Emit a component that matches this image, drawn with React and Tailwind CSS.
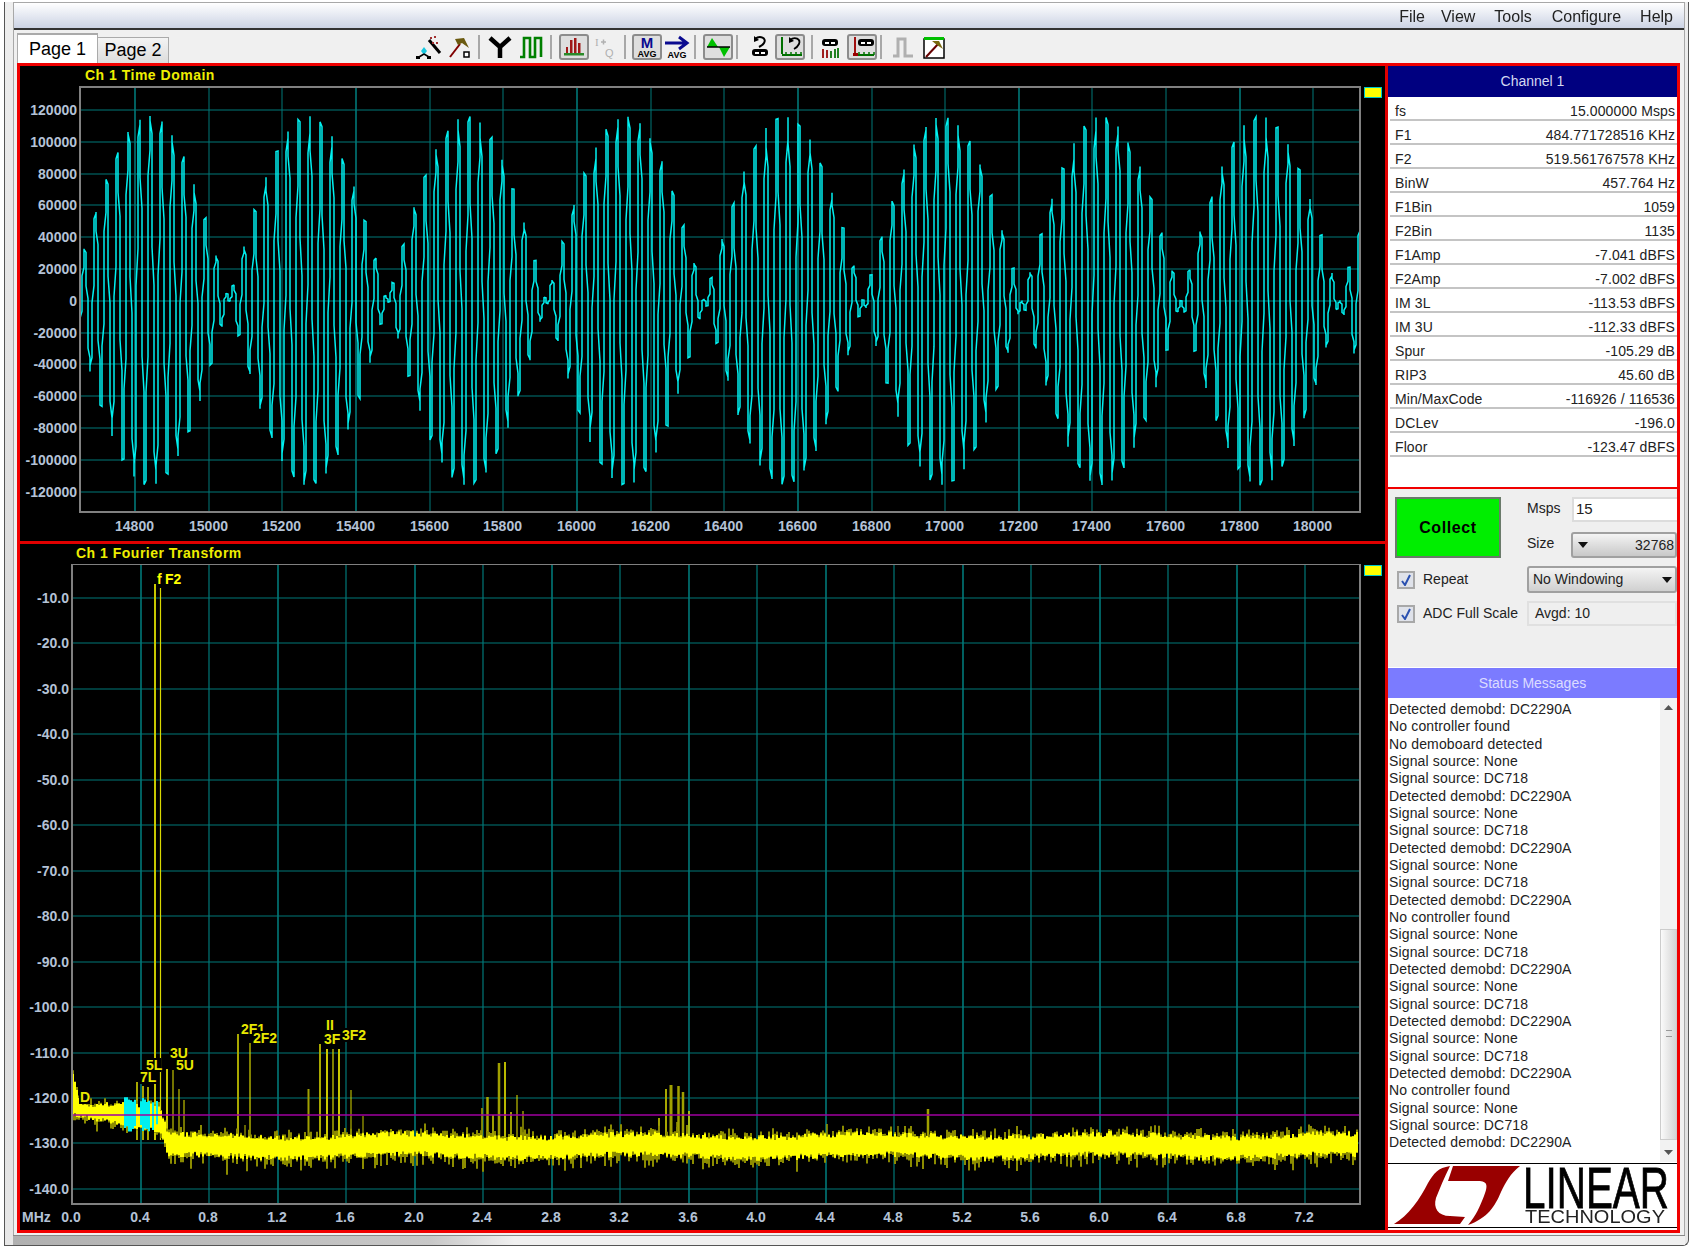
import { useMemo } from "react"

const infoRows = [
  ["fs", "15.000000 Msps"],
  ["F1", "484.771728516 KHz"],
  ["F2", "519.561767578 KHz"],
  ["BinW", "457.764 Hz"],
  ["F1Bin", "1059"],
  ["F2Bin", "1135"],
  ["F1Amp", "-7.041 dBFS"],
  ["F2Amp", "-7.002 dBFS"],
  ["IM 3L", "-113.53 dBFS"],
  ["IM 3U", "-112.33 dBFS"],
  ["Spur", "-105.29 dB"],
  ["RIP3", "45.60 dB"],
  ["Min/MaxCode", "-116926 / 116536"],
  ["DCLev", "-196.0"],
  ["Floor", "-123.47 dBFS"],
]

const D = "Detected demobd: DC2290A"
const N = "Signal source: None"
const S = "Signal source: DC718"
const C = "No controller found"
const messages = [D, C, "No demoboard detected", N, S, D, N, S, D, N, S, D, C, N, S, D, N, S, D, N, S, D, C, N, S, D]

const AXIS = "#b4c2d6"
const GRID = "#007878"

function rng(seed) {
  let s = seed
  return () => {
    s = (s * 16807) % 2147483647
    return s / 2147483647
  }
}

// two tone signal, 15 Msps, snapped to pixel columns like the original plot
function wavePath() {
  let d = ""
  for (let n = 14650; n <= 18129; n += 1) {
    const x = Math.round((135 + (n - 14800) * 0.368) / 2) * 2
    const env = Math.sin(Math.PI * (34790 / 15e6) * (n - 15055))
    const car = Math.cos(2 * Math.PI * (502167 / 15e6) * (n - 14827))
    const y = 300.7 - 116000 * env * car * 0.0015917
    d += (d ? "L" : "M") + x + " " + y.toFixed(1)
  }
  return d
}

function noiseFloor() {
  const r = rng(4711)
  let bright = ""
  let dim = ""
  let cyan = ""
  for (let x = 72; x <= 1356; x += 2) {
    let top, bot, tipT, tipB
    if (x < 166) {
      const t = (x - 72) / 94
      top = 1102 + 6 * r()
      bot = 1112 + 18 * t + 5 * r()
      if (x > 158) {
        top += (x - 158) * 3.2
        bot += (x - 158) * 2.2
      }
      if (x < 79) top = 1074 + (x - 72) * 4
      tipT = top - 8 * r() * r()
      tipB = bot + 11 * r() * r()
    } else {
      const c = 1146 + 2 * Math.sin(x / 37)
      top = c - 7 - r() * 6
      bot = c + 7 + r() * 6
      tipT = top - 11 * r() * r()
      tipB = bot + 15 * r() * r()
      if (r() > 0.97) tipB += 8
    }
    bright += `M${x + 1} ${top.toFixed(1)}V${bot.toFixed(1)}`
    dim += `M${x + 1} ${tipT.toFixed(1)}V${tipB.toFixed(1)}`
    if ((x >= 123 && x < 135) || (x >= 139 && x < 148) || (x >= 148 && x < 158 && x % 4 === 0)) {
      cyan += `M${x + 1} ${1097 + r() * 6}V${1124 + r() * 8}`
    }
  }
  return { bright, dim, cyan }
}

// [x, top, width, colour]
const spikes = [
  [137, 1082, 2, "#a8a800"], [143, 1086, 2, "#a8a800"], [148, 1087, 2, "#a8a800"],
  [155, 584, 2, "#c8c800"], [160.5, 588, 1.2, "#d8d800"],
  [167, 1069, 2, "#c8c800"], [173, 1070, 1, "#e8e800"], [179, 1089, 1, "#e8e800"], [184, 1100, 1, "#e8e800"],
  [238, 1034, 2, "#a8a800"], [245, 1125, 1, "#c8c800"], [250, 1043, 1.2, "#d8d800"],
  [308.5, 1089, 2, "#a0a000"], [320, 1044, 2, "#a8a800"], [327, 1049, 2, "#c8c800"], [333, 1049, 1.2, "#d8d800"],
  [339, 1049, 2, "#c8c800"], [351, 1090, 1, "#d8d800"], [363, 1116, 1, "#c8c800"],
  [482, 1108, 1.5, "#a8a800"], [487.5, 1097, 2.5, "#a8a800"], [493, 1115, 2, "#a0a000"], [499, 1063, 2.5, "#a0a000"],
  [505, 1062, 2, "#b8b800"], [511, 1112, 2, "#a0a000"], [517, 1095, 1, "#e8e800"], [523, 1111, 1, "#e8e800"],
  [659, 1118, 2, "#a0a000"], [666, 1089, 2, "#a8a800"], [671, 1085, 3, "#a0a000"], [677, 1122, 1.5, "#a0a000"],
  [678.5, 1086, 2.5, "#a0a000"], [683, 1092, 2.5, "#a0a000"], [689, 1111, 1.5, "#d8d800"],
  [827, 1124, 1.5, "#a0a000"], [898, 1126, 1, "#c8c800"], [928, 1109, 2.5, "#a0a000"],
]

// [text, x, baseline, box width]
const peakLabels = [
  ["3U", 170, 1058, 19], ["5L", 146, 1070, 16], ["5U", 176, 1070, 18], ["7L", 140, 1082, 17], ["D", 80, 1102, 11],
  ["2F1", 241, 1034, 24], ["2F2", 253, 1043, 25], ["II", 326, 1030, 9], ["3F", 324, 1044, 18], ["3F2", 342, 1040, 24],
]

function TimeChart() {
  const d = useMemo(wavePath, [])
  const xTicks = Array.from({ length: 17 }, (_, i) => 14800 + i * 200)
  const yTicks = Array.from({ length: 13 }, (_, i) => 120000 - i * 20000)
  return (
    <svg width="1365" height="455" viewBox="20 86 1365 455" className="block">
      <defs>
        <clipPath id="plotA"><rect x="81" y="88" width="1278" height="423" /></clipPath>
      </defs>
      {xTicks.map((t, i) => {
        const x = Math.round(135 + i * 73.65)
        return (
          <g key={t}>
            <line x1={x} x2={x} y1="87" y2="512" stroke={GRID} strokeWidth={i % 3 === 0 ? 1.6 : 1} />
            <text x={x - 0.5} y="531" fontSize="14" fontWeight="700" fill={AXIS} textAnchor="middle">{t}</text>
          </g>
        )
      })}
      {yTicks.map((t, i) => {
        const y = Math.round(110 + i * 31.8)
        return (
          <g key={t}>
            <line x1="80" x2="1360" y1={y} y2={y} stroke={GRID} strokeWidth="1.2" />
            <text x="77" y={y + 5} fontSize="14" fontWeight="700" fill={AXIS} textAnchor="end">{t}</text>
          </g>
        )
      })}
      <path d={d} clipPath="url(#plotA)" fill="none" stroke="#00f0f0" strokeWidth="1.5" />
      <rect x="80" y="87" width="1280" height="425" fill="none" stroke="#808080" strokeWidth="2" />
      <rect x="1364.5" y="87.5" width="17" height="10" fill="#ffff00" stroke="#00c8c8" />
    </svg>
  )
}

function FourierChart() {
  const floor = useMemo(noiseFloor, [])
  const yTicks = Array.from({ length: 14 }, (_, i) => -10 - i * 10)
  const xTicks = Array.from({ length: 19 }, (_, i) => i * 0.4)
  return (
    <svg width="1365" height="666" viewBox="20 564 1365 666" className="block">
      {xTicks.map((t, i) => {
        const x = Math.round(72 + t * 171.3)
        return (
          <g key={i}>
            <line x1={x} x2={x} y1="564" y2="1204" stroke={GRID} strokeWidth={i % 2 === 0 ? 1.2 : 1.6} />
            <text x={x - 1} y="1222" fontSize="14" fontWeight="700" fill={AXIS} textAnchor="middle">{t.toFixed(1)}</text>
          </g>
        )
      })}
      <text x="22" y="1222" fontSize="14" fontWeight="700" fill={AXIS}>MHz</text>
      {yTicks.map((t, i) => {
        const y = Math.round(598 + i * 45.45)
        return (
          <g key={t}>
            <line x1="72" x2="1360" y1={y} y2={y} stroke={GRID} strokeWidth="1.2" />
            <text x="69" y={y + 5} fontSize="14" fontWeight="700" fill={AXIS} textAnchor="end">{t.toFixed(1)}</text>
          </g>
        )
      })}
      {spikes.map(([x, top, w, c]) => (
        <line key={x} x1={x} x2={x} y1={top} y2="1140" stroke={c} strokeWidth={w} />
      ))}
      <path d={floor.dim} stroke="#8c8c00" strokeWidth="2" fill="none" />
      <path d={floor.bright} stroke="#ffff00" strokeWidth="2" fill="none" />
      <path d={floor.cyan} stroke="#00f0f0" strokeWidth="2" fill="none" />
      <line x1="72" x2="1360" y1="1115" y2="1115" stroke="#a000a0" strokeWidth="1.4" />
      {peakLabels.map(([txt, x, y, w]) => (
        <g key={txt + x}>
          <rect x={x - 1} y={y - 12} width={w} height="14" fill="#000" />
          <text x={x} y={y} fontSize="14" fontWeight="700" fill="#e8e800">{txt}</text>
        </g>
      ))}
      <text x="157" y="584" fontSize="14" fontWeight="700" fill="#ffff00">f</text>
      <text x="165" y="584" fontSize="14" fontWeight="700" fill="#ffff00">F2</text>
      <rect x="72" y="564" width="1288" height="640" fill="none" stroke="#808080" strokeWidth="2" />
      <rect x="1364.5" y="565.5" width="17" height="10" fill="#ffff00" stroke="#00c8c8" />
    </svg>
  )
}

function Sep({ className }) {
  return <div className={"h-[24px] w-[2px] bg-[#a8a8a8] " + className} />
}

function Tool({ pressed, className, children }) {
  return (
    <div className={"h-[26px] w-[30px] shrink-0 " + className + (pressed ? " rounded-[3px] border-2 border-[#8c8c8c] bg-[#dedede]" : "")}>
      <svg width={pressed ? 26 : 30} height={pressed ? 22 : 26} viewBox={pressed ? "2 2 26 22" : "0 0 30 26"} className="block overflow-visible">
        {children}
      </svg>
    </div>
  )
}

function Blob({ x, y }) {
  return (
    <g>
      <rect x={x} y={y} width="16" height="7" rx="3" fill="#000" />
      <rect x={x + 3} y={y + 3} width="4" height="2" fill="#fff" />
      <rect x={x + 9} y={y + 3} width="4" height="2" fill="#fff" />
    </g>
  )
}

function Ticks({ x, y, w }) {
  return (
    <g stroke="#007000" fill="none">
      <path d={`M${x} ${y}H${x + w}`} strokeWidth="2" />
      {[4, 9, 14, 19].map((o) => (
        <path key={o} d={`M${x + o} ${y}v-3`} strokeWidth="1.5" />
      ))}
    </g>
  )
}

function Toolbar() {
  return (
    <div className="ml-[245px] flex items-center self-center">
      <Tool>
        <path d="M15 6 26 19" stroke="#000" strokeWidth="3" />
        <path d="M10 13l3 4-3 4-3-4z" fill="#18c8e0" />
        <path d="M10 20 5 23M10 20l5 3" stroke="#000" strokeWidth="1.5" />
        <rect x="2" y="22" width="4" height="3" fill="#000" />
        <rect x="13" y="22" width="4" height="3" fill="#000" />
        <g fill="#a03030">
          <rect x="16" y="3" width="2" height="2" />
          <rect x="20" y="2" width="2" height="2" />
          <rect x="22" y="8" width="2" height="2" />
          <rect x="18" y="8" width="2" height="2" />
        </g>
      </Tool>
      <Tool>
        <path d="M6 23 16 10" stroke="#800000" strokeWidth="2" />
        <path d="M11 5 20 4 25 14 18 9 14 11z" fill="#6b5a10" />
        <rect x="20" y="18" width="5" height="5" fill="#fff" stroke="#000" strokeWidth="1.5" />
      </Tool>
      <Sep className="ml-[4px]" />
      <Tool className="ml-[5px]">
        <path d="M5 4 15 13 25 4M15 13V24" fill="none" stroke="#000" strokeWidth="4.5" />
      </Tool>
      <Tool className="ml-[1px]">
        <path d="M4 23H8V4H14V23H19V4H25V23" fill="none" stroke="#008000" strokeWidth="2.6" />
      </Tool>
      <Sep className="ml-[4px]" />
      <Tool pressed className="ml-[7px]">
        <g fill="#a01818">
          <rect x="7" y="13" width="2" height="7" />
          <rect x="11" y="6" width="2.5" height="14" />
          <rect x="15" y="4" width="2.5" height="16" />
          <rect x="19" y="9" width="2.5" height="11" />
        </g>
        <rect x="5" y="19" width="20" height="2.5" fill="#2a8a2a" />
      </Tool>
      <Tool>
        <text x="6" y="12" fontSize="11" fill="#b0b0b0" fontFamily="'Liberation Serif',serif">I</text>
        <path d="M12 8h5M14.5 5.500v5" stroke="#b0b0b0" strokeWidth="1.500" />
        <text x="16" y="23" fontSize="11" fill="#b0b0b0">Q</text>
      </Tool>
      <Sep className="ml-[5px]" />
      <Tool pressed className="ml-[6px]">
        <text x="15" y="14" fontSize="15" fontWeight="700" fill="#0a0a90" textAnchor="middle">M</text>
        <text x="15" y="23" fontSize="9" fontWeight="700" fill="#000" textAnchor="middle">AVG</text>
      </Tool>
      <Tool>
        <path d="M3 9H24M17 3 25 9 17 15" fill="none" stroke="#0a0a90" strokeWidth="3" />
        <text x="15" y="24" fontSize="9" fontWeight="700" fill="#000" textAnchor="middle">AVG</text>
      </Tool>
      <Sep className="ml-[2px]" />
      <Tool pressed className="ml-[7px]">
        <path d="M9 4 15 13H4z" fill="#00c000" />
        <path d="M16 13H27L21 23z" fill="#00c000" />
        <path d="M4 13H27" stroke="#000" strokeWidth="1.500" />
      </Tool>
      <Sep className="ml-[3px]" />
      <Tool className="ml-[5px]">
        <path d="M12 5C17 1 24 4 21 9 20 11 18 12 16 13" fill="none" stroke="#000" strokeWidth="2" />
        <path d="M11 2v6l5-2z" fill="#000" />
        <Blob x={9} y={15} />
      </Tool>
      <Tool pressed className="ml-[2px]">
        <path d="M7 3V20" stroke="#007000" strokeWidth="2" />
        <Ticks x={7} y={21} w={20} />
        <path d="M15 6C20 2 26 5 24 10 23 12 21 14 19 15" fill="none" stroke="#000" strokeWidth="1.800" />
        <path d="M14 3v6l5-2z" fill="#000" />
      </Tool>
      <Sep className="ml-[6px]" />
      <Tool className="ml-[2px]">
        <Blob x={7} y={5} />
        <g fill="#a02020">
          <rect x="7" y="15" width="2" height="9" />
          <rect x="11" y="16" width="2" height="8" />
        </g>
        <g fill="#208020">
          <rect x="15" y="17" width="2" height="7" />
          <rect x="19" y="15" width="2" height="9" />
          <rect x="22" y="14" width="2" height="10" />
        </g>
      </Tool>
      <Tool pressed className="ml-[2px]">
        <path d="M8 3V21" stroke="#a01010" strokeWidth="2" />
        <Ticks x={8} y={21} w={19} />
        <rect x="6" y="19" width="5" height="3" fill="#900" />
        <Blob x={11} y={5} />
      </Tool>
      <Sep className="ml-[3px]" />
      <Tool className="ml-[6px]">
        <path d="M5 22H10V5H17V22H25" fill="none" stroke="#b0b0b0" strokeWidth="3" />
      </Tool>
      <Tool className="ml-[1px]">
        <rect x="5" y="5" width="20" height="19" fill="#fff" stroke="#000" strokeWidth="1.500" />
        <rect x="5" y="3" width="20" height="3" fill="#00c000" />
        <path d="M7 23 20 9" stroke="#600" strokeWidth="2" />
        <path d="M13 7 20 7 24 15 18 11z" fill="#7a6a10" />
      </Tool>
    </div>
  )
}

function Check() {
  return (
    <div className="flex h-[18px] w-[18px] items-center justify-center border-2 border-[#a8a8a8] bg-[#dfe2ea]">
      <svg width="12" height="12" viewBox="0 0 12 12">
        <path d="M2 7 5 11 10 1" fill="none" stroke="#2a50b0" strokeWidth="2" />
      </svg>
    </div>
  )
}

function Arrow() {
  return (
    <svg width="10" height="6" viewBox="0 0 10 6">
      <path d="M0 0H10L5 6z" fill="#111" />
    </svg>
  )
}

function ScrollArrow({ up }) {
  return (
    <svg width="9" height="5" viewBox="0 0 9 5" className={up ? "" : "rotate-180"}>
      <path d="M0 5H9L4.500 0z" fill="#555" />
    </svg>
  )
}

function Controls() {
  return (
    <div className="h-[178px] bg-[#efefef] pl-[7px] pt-[8px] text-[14px] text-[#222]">
      <div className="flex h-[61px]">
        <div className="flex w-[106px] items-center justify-center border-2 border-[#6a7a6a] bg-[#00ee00] text-[16px] font-bold tracking-[0.6px] text-black">
          Collect
        </div>
        <div className="ml-[26px] flex w-[150px] flex-col justify-between">
          <div className="flex h-[25px] items-center">
            <span className="w-[45px] -translate-y-[1px]">Msps</span>
            <div className="flex h-full flex-1 items-center border-2 border-r-0 border-[#dcdcdc] bg-white pl-[2px] text-[15px]">15</div>
          </div>
          <div className="flex h-[26px] items-center">
            <span className="w-[44px] -translate-y-[2px]">Size</span>
            <div className="flex h-full flex-1 items-center justify-between rounded-[3px] border-2 border-[#a0a0a0] bg-linear-to-b from-[#f4f4f4] to-[#c8c8c8] pl-[5px]">
              <Arrow />
              <span className="pr-[1px]">32768</span>
            </div>
          </div>
        </div>
      </div>
      <div className="mt-[8px] flex h-[27px] items-center">
        <div className="flex w-[132px] items-center pl-[2px]">
          <Check />
          <span className="ml-[8px]">Repeat</span>
        </div>
        <div className="flex h-full w-[150px] items-center justify-between rounded-[3px] border-2 border-[#a0a0a0] bg-linear-to-b from-[#f4f4f4] to-[#d0d0d0] pl-[4px] pr-[3px]">
          <span>No Windowing</span>
          <Arrow />
        </div>
      </div>
      <div className="mt-[8px] flex h-[25px] items-center">
        <div className="flex w-[132px] items-center pl-[2px]">
          <Check />
          <span className="ml-[8px] whitespace-nowrap">ADC Full Scale</span>
        </div>
        <div className="flex h-full w-[150px] items-center border-2 border-[#e0e0e0] pl-[6px]">Avgd: 10</div>
      </div>
    </div>
  )
}

function StatusList() {
  return (
    <div className="flex h-[464px] bg-white">
      <div className="flex-1 overflow-hidden pl-[1px] pt-[3px] text-[14px] leading-[17.33px] tracking-[0.15px] text-[#222]">
        {messages.map((m, i) => (
          <div key={i} className="whitespace-nowrap">{m}</div>
        ))}
      </div>
      <div className="flex w-[17px] flex-col items-center bg-[#f2f2f2] py-[7px]">
        <ScrollArrow up />
        <div className="relative mb-[10px] mt-auto h-[211px] w-[17px] border border-[#ccc] bg-linear-to-r from-[#fafafa] to-[#d4d4d4]">
          <div className="absolute left-[5px] top-[100px] h-[7px] w-[6px] border-y border-[#999]" />
        </div>
        <ScrollArrow />
      </div>
    </div>
  )
}

function Logo() {
  return (
    <div className="h-[68px] bg-white pt-[1px]">
      <div className="h-[65px] border-y border-black">
        <svg width="287" height="63" viewBox="0 0 287 63" className="block overflow-visible">
          <path d="M6 60C20 52 32 35 40 19 46 9 50 4 62 2 56 14 52 24 48 34 45 44 50 52 62 52L77 53 72 60Z" fill="#990000" />
          <path d="M65 2H132C122 10 118 18 113 28 107 42 100 54 80 61 88 52 92 42 96 32 100 22 100 17 90 17H60Z" fill="#990000" />
          <text x="135" y="44" fontSize="57" fill="#000" stroke="#000" strokeWidth="0.8" textLength="146" lengthAdjust="spacingAndGlyphs">LINEAR</text>
          <text x="137" y="59" fontSize="18" fill="#222" textLength="140" lengthAdjust="spacingAndGlyphs">TECHNOLOGY</text>
        </svg>
      </div>
    </div>
  )
}

export default function App() {
  return (
    <div className="h-[1250px] w-[1695px] overflow-hidden bg-white pl-[4px] pt-[2px] [font-family:'Liberation_Sans',Arial,sans-serif]">
      <div className="flex h-[1244px] w-[1685px] flex-col rounded-br-[6px] border-x border-b border-x-[#555] border-b-[#555] bg-linear-to-b from-[#eee] via-[#d4d4d4] via-70% to-[#e8e8e8] pl-[8px] pr-[3px]">
        <div className="flex h-[1233px] flex-col border-x border-t border-[#a8a8a8] border-b-0 bg-[#f0f0f0]">
          {/* menu */}
          <div className="flex h-[27px] items-center justify-end border-b-2 border-[#333] bg-linear-to-b from-white to-[#ccd3e4] pr-[11px] pt-[2px] text-[16px] text-[#222] blur-[0.3px]">
            <span>File</span>
            <span className="ml-[16px]">View</span>
            <span className="ml-[19px]">Tools</span>
            <span className="ml-[20px]">Configure</span>
            <span className="ml-[19px]">Help</span>
          </div>
          {/* tabs and toolbar */}
          <div className="flex h-[33px] items-end pl-[3px]">
            <div className="flex h-[30px] w-[81px] items-center justify-center border-x border-t-2 border-[#aaa] bg-white text-[18px] text-black">Page 1</div>
            <div className="flex h-[26px] w-[71px] items-center justify-center border-r border-t border-[#aaa] bg-linear-to-b from-[#f4f4f4] to-[#dcdcdc] text-[18px] text-black">Page 2</div>
            <Toolbar />
          </div>
          {/* red frame */}
          <div className="ml-[3px] flex h-[1170px] w-[1663px] border-[3px] border-[#f00000]">
            <div className="flex w-[1365px] flex-col bg-black">
              <div className="h-[20px] pl-[65px] text-[14px] font-bold leading-[18px] tracking-[0.5px] text-[#eeee00]">Ch 1 Time Domain</div>
              <TimeChart />
              <div className="h-[3px] bg-[#e00000]" />
              <div className="h-[20px] pl-[56px] text-[14px] font-bold leading-[18px] tracking-[0.5px] text-[#eeee00]">Ch 1 Fourier Transform</div>
              <FourierChart />
            </div>
            <div className="w-[3px] bg-[#e00000]" />
            <div className="flex w-[289px] flex-col blur-[0.3px]">
              <div className="h-[421px] bg-white">
                <div className="flex h-[31px] items-center justify-center bg-[#000080] text-[14px] text-[#d4d8f0]">Channel 1</div>
                {infoRows.map(([label, value]) => (
                  <div key={label} className="ml-[2px] flex h-[24px] items-center justify-between border-b-2 border-[#c4c4c4] pl-[5px] pr-[2px] pt-[6px] text-[14px] tracking-[0.1px] text-[#222]">
                    <span>{label}</span>
                    <span>{value}</span>
                  </div>
                ))}
              </div>
              <div className="h-[2px] bg-[#f00000]" />
              <Controls />
              <div className="flex h-[31px] items-center justify-center border-t border-white bg-[#7b7bff] text-[14px] text-[#dcdcff]">Status Messages</div>
              <StatusList />
              <Logo />
            </div>
          </div>
        </div>
        <div className="h-[10px] border-t border-[#888] bg-linear-to-r from-[#b0b0b0] via-[#c8c8c8] via-25% to-[#f0f0f0] to-30%" />
      </div>
    </div>
  )
}
